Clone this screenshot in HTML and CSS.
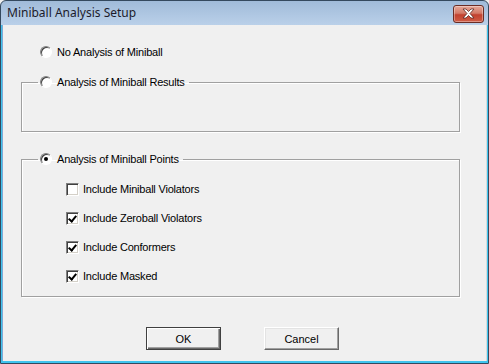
FILE: index.html
```html
<!DOCTYPE html>
<html lang="en">
<head>
    <meta charset="UTF-8">
    <title>Miniball Analysis Setup</title>
    <link rel="stylesheet" href="styles.css">
</head>
<body>
    <div class="window">
        <div class="titlebar">
            <span class="title">Miniball Analysis Setup</span>
            <div class="close-btn">
                <svg width="15" height="11" viewBox="0 0 15 11">
                    <path d="M2 1 L5 1 L7.5 3.5 L10 1 L13 1 L9 5.5 L13 10 L10 10 L7.5 7.5 L5 10 L2 10 L6 5.5 Z" fill="#fff" stroke="#5b2a25" stroke-width="0.8"/>
                </svg>
            </div>
        </div>
        <div class="client">
            <div class="option">
                <span class="radio"></span>
                <span>No Analysis of Miniball</span>
            </div>

            <fieldset class="group group-results">
                <legend class="option">
                    <span class="radio"></span>
                    <span>Analysis of Miniball Results</span>
                </legend>
            </fieldset>

            <fieldset class="group group-points">
                <legend class="option">
                    <span class="radio checked"></span>
                    <span>Analysis of Miniball Points</span>
                </legend>
                <div class="checks">
                    <div class="option">
                        <span class="check"></span>
                        <span>Include Miniball Violators</span>
                    </div>
                    <div class="option">
                        <span class="check checked"></span>
                        <span>Include Zeroball Violators</span>
                    </div>
                    <div class="option">
                        <span class="check checked"></span>
                        <span>Include Conformers</span>
                    </div>
                    <div class="option">
                        <span class="check checked"></span>
                        <span>Include Masked</span>
                    </div>
                </div>
            </fieldset>

            <div class="buttons">
                <button class="btn btn-default">OK</button>
                <button class="btn">Cancel</button>
            </div>
        </div>
    </div>
</body>
</html>
```

FILE: styles.css
```css
body {
    margin: 0;
    font-family: "Liberation Sans", Arial, sans-serif;
    font-size: 11px;
    letter-spacing: -0.2px;
    color: #000;
    background-color: #f0f0f0;
}
.window {
    width: 489px;
    height: 364px;
    box-sizing: border-box;
    border: 1px solid #34495e;
    border-radius: 6px 6px 0 0;
    background: linear-gradient(to bottom, #a0bbd9 0, #bad0e9 24px, #3fc4ee 24px);
    display: flex;
    flex-direction: column;
    overflow: hidden;
}
.titlebar {
    height: 24px;
    flex-shrink: 0;
    display: flex;
    align-items: center;
    justify-content: space-between;
    padding: 0 4px 0 6px;
}
.title {
    font-family: "Noto Sans", "Open Sans", sans-serif;
    font-size: 12px;
    letter-spacing: 0;
    color: #1b1b2b;
    margin-top: -1px;
}
.close-btn {
    width: 29px;
    height: 16px;
    margin-top: 1px;
    border: 1px solid #6a2c24;
    border-radius: 3px;
    background: linear-gradient(to bottom, #e6a898 0, #d47a68 45%, #c2412f 55%, #cf5c45 100%);
    box-shadow: inset 0 0 0 1px rgba(255, 255, 255, 0.35);
    display: flex;
    align-items: center;
    justify-content: center;
}
.client {
    flex: 1;
    margin: 0 1px 2px 1px;
    background-color: #f0f0f0;
    border-left: 1px solid #7fa9d6;
    border-right: 1px solid #d9d9d9;
    padding: 20px 26px 0 18px;
    display: flex;
    flex-direction: column;
}
.option {
    display: flex;
    align-items: center;
    height: 14px;
    line-height: 14px;
    white-space: nowrap;
}
.client > .option {
    padding-left: 19px;
}
.radio {
    width: 12px;
    height: 12px;
    box-sizing: border-box;
    border-radius: 50%;
    border: 1px solid;
    border-color: #808080 #ffffff #ffffff #808080;
    box-shadow: inset 1px 1px 0 #404040;
    background-color: #fff;
    margin-right: 5px;
    position: relative;
}
.radio.checked::after {
    content: "";
    position: absolute;
    left: 3px;
    top: 3px;
    width: 4px;
    height: 4px;
    border-radius: 50%;
    background-color: #000;
}
.group {
    margin: 0;
    border: 1px solid #a0a0a0;
    box-shadow: inset 1px 1px 0 #fff, 1px 1px 0 #fff;
    padding: 0 0 0 16px;
    min-width: 0;
}
.group legend {
    padding: 0 4px 0 2px;
}
.group-results {
    margin-top: 16px;
    height: 57px;
    box-sizing: border-box;
}
.group-points {
    margin-top: 20px;
    height: 145px;
    box-sizing: border-box;
}
.checks {
    margin: 16px 0 0 28px;
    display: flex;
    flex-direction: column;
    gap: 15px;
}
.check {
    width: 13px;
    height: 13px;
    box-sizing: border-box;
    border: 1px solid;
    border-color: #808080 #ffffff #ffffff #808080;
    box-shadow: inset 1px 1px 0 #404040, inset -1px -1px 0 #d4d0c8;
    background-color: #fff;
    margin-right: 4px;
    position: relative;
}
.check.checked::after {
    content: "";
    position: absolute;
    left: 3px;
    top: 1px;
    width: 3px;
    height: 6px;
    border: solid #000;
    border-width: 0 2px 2px 0;
    transform: rotate(40deg);
}
.buttons {
    display: flex;
    justify-content: center;
    gap: 43px;
    margin-top: 30px;
    padding-left: 4px;
}
.btn {
    width: 75px;
    height: 23px;
    box-sizing: border-box;
    font-family: "Liberation Sans", Arial, sans-serif;
    font-size: 11px;
    color: #000;
    background-color: #f0f0f0;
    border: 1px solid;
    border-color: #ffffff #696969 #696969 #ffffff;
    box-shadow: inset -1px -1px 0 #a0a0a0, inset 1px 1px 0 #e3e3e3;
    padding: 0;
}
.btn-default {
    border: 1px solid #404040;
    box-shadow: inset 1px 1px 0 #fff, inset -1px -1px 0 #696969, inset -2px -2px 0 #a0a0a0;
}
```
